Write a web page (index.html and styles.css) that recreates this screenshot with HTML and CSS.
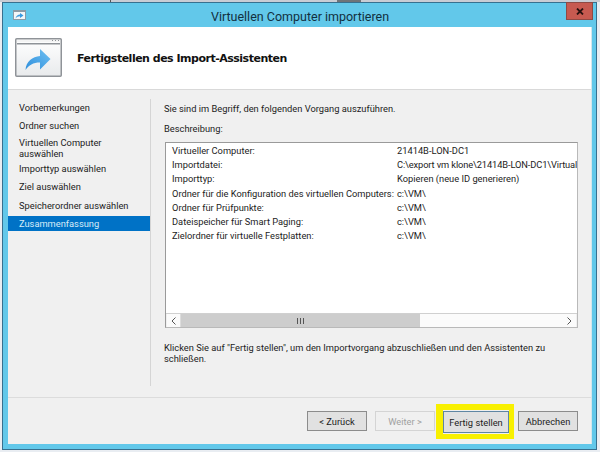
FILE: index.html
```html
<!DOCTYPE html>
<html lang="de">
<head>
<meta charset="utf-8">
<title>Virtuellen Computer importieren</title>
<link rel="stylesheet" href="styles.css">
</head>
<body>
<div class="desktop-strip"><i class="mark m1"></i><i class="mark m2"></i></div>
<div class="window">
  <div class="titlebar">
    <svg class="title-icon" width="13" height="10" viewBox="0 0 13 10"><rect x=".5" y=".5" width="12" height="9" fill="#f4f6f8" stroke="#8a9aa6"/><rect x="1" y="1" width="11" height="1" fill="#8a9aa6"/><path d="M2.5 8.500C3 6 5 4.600 7 4.600V3l3.500 2.500L7 8V6.300C5 6.300 3.700 7 2.500 8.500z" fill="#3a9be0"/></svg>
    <span class="title-text">Virtuellen Computer importieren</span>
    <span class="close"><svg width="8" height="7" viewBox="0 0 8 7"><path d="M1 .5l6 6M7 .5l-6 6" stroke="#2a1210" stroke-width="1.800"/></svg></span>
  </div>
  <div class="client">
    <header class="header">
      <svg class="header-icon" width="47" height="39" viewBox="0 0 47 39">
        <defs><linearGradient id="arrow" x1="0" y1="1" x2="1" y2="0"><stop offset="0" stop-color="#2f8fdc"/><stop offset="1" stop-color="#6fc0f2"/></linearGradient>
        <linearGradient id="pane" x1="0" y1="0" x2="0" y2="1"><stop offset="0" stop-color="#ffffff"/><stop offset="1" stop-color="#e8eaec"/></linearGradient></defs>
        <rect x=".75" y=".75" width="45.500" height="37.500" rx="1" fill="url(#pane)" stroke="#8f9398" stroke-width="1.500"/>
        <rect x="2" y="2" width="43" height="2" fill="#f4f4f4"/>
        <path d="M37 2.500h1M40 2.500h1M43 2.500h1" stroke="#8f9398"/>
        <rect x="2" y="5" width="43" height="1.500" fill="#8f9398"/>
        <path d="M10.500 32C11 23.500 17.500 18.500 25 18V11l10.500 10L25 31.500V24.500C18 24.500 14 27 10.500 32z" fill="url(#arrow)"/>
      </svg>
      <h1 class="heading">Fertigstellen des Import-Assistenten</h1>
    </header>
    <div class="main">
      <nav class="steps">
        <div class="step">Vorbemerkungen</div>
        <div class="step">Ordner suchen</div>
        <div class="step step-two">Virtuellen Computer auswählen</div>
        <div class="step">Importtyp auswählen</div>
        <div class="step">Ziel auswählen</div>
        <div class="step">Speicherordner auswählen</div>
        <div class="step selected">Zusammenfassung</div>
      </nav>
      <section class="content">
        <p class="intro">Sie sind im Begriff, den folgenden Vorgang auszuführen.</p>
        <p class="label">Beschreibung:</p>
        <div class="listbox">
          <div class="rows">
            <div class="row"><span class="key">Virtueller Computer:</span><span class="val">21414B-LON-DC1</span></div>
            <div class="row"><span class="key">Importdatei:</span><span class="val val-tight">C:\export vm klone\21414B-LON-DC1\Virtual</span></div>
            <div class="row"><span class="key">Importtyp:</span><span class="val">Kopieren (neue ID generieren)</span></div>
            <div class="row"><span class="key">Ordner für die Konfiguration des virtuellen Computers:</span><span class="val">c:\VM\</span></div>
            <div class="row"><span class="key">Ordner für Prüfpunkte:</span><span class="val">c:\VM\</span></div>
            <div class="row"><span class="key">Dateispeicher für Smart Paging:</span><span class="val">c:\VM\</span></div>
            <div class="row"><span class="key">Zielordner für virtuelle Festplatten:</span><span class="val">c:\VM\</span></div>
          </div>
          <div class="scrollbar">
            <span class="sb-btn"><svg width="5" height="8" viewBox="0 0 5 8"><path d="M4.500.5L1 4l3.500 3.500" fill="none" stroke="#555"/></svg></span>
            <span class="sb-thumb"><svg width="7" height="6" viewBox="0 0 7 6"><path d="M.5 0v6M3.500 0v6M6.500 0v6" stroke="#555"/></svg></span>
            <span class="sb-track"></span>
            <span class="sb-btn"><svg width="5" height="8" viewBox="0 0 5 8"><path d="M.5.500L4 4 .5 7.500" fill="none" stroke="#555"/></svg></span>
          </div>
        </div>
        <p class="outro">Klicken Sie auf "Fertig stellen", um den Importvorgang abzuschließen und den Assistenten zu schließen.</p>
      </section>
    </div>
    <footer class="footer">
      <button class="btn" type="button">&lt; Zurück</button>
      <button class="btn disabled" type="button">Weiter &gt;</button>
      <span class="finish-wrap"><button class="btn finish" type="button">Fertig stellen</button><span class="highlight"></span></span>
      <button class="btn" type="button">Abbrechen</button>
    </footer>
  </div>
</div>
</body>
</html>
```
FILE: styles.css
```css
* { box-sizing: border-box; }
html, body { margin: 0; padding: 0; }
body {
  width: 600px;
  height: 452px;
  overflow: hidden;
  background: #e9edf2;
  font-family: Roboto, "Open Sans", sans-serif;
  font-size: 9.300px;
  color: #1c1c1c;
  position: relative;
}
.desktop-strip { height: 2px; background: #c8ccd4; position: relative; }
.mark { position: absolute; top: 0; height: 2px; background: #555; }
.m1 { left: 110px; width: 1px; }
.m2 { left: 337px; width: 24px; background: #6f7378; }
.window {
  margin-left: 2px;
  width: 595px;
  height: 448px;
  background: #62c8ea;
  border: 1px solid #37708f;
  display: flex;
  flex-direction: column;
  padding: 0 4px 5px 5px;
}
.titlebar {
  height: 24px;
  flex: none;
  display: flex;
  align-items: center;
  justify-content: center;
  position: relative;
  font-size: 12.500px;
  color: #12303f;
}
.title-icon { position: absolute; left: 5px; top: 7px; }
.title-text { position: relative; top: 1px; }
.close {
  position: absolute;
  right: -1px;
  top: -1px;
  width: 27px;
  height: 18px;
  background: #c75a50;
  border: 1px solid #8f4a44;
  display: flex;
  align-items: center;
  justify-content: center;
}
.client {
  flex: 1;
  min-height: 0;
  background: #f0f0f0;
  display: flex;
  flex-direction: column;
  border-right: 1px solid #d6e6ec;
}
.header {
  height: 63px;
  flex: none;
  background: #fff;
  border-bottom: 1px solid #d9d9d9;
  display: flex;
  align-items: center;
  padding-left: 7px;
  gap: 15px;
}
.header-icon { position: relative; top: -1px; }
.heading { margin: 1px 0 0; font-size: 11px; font-weight: 700; color: #111; font-family: "DejaVu Sans", sans-serif; letter-spacing: -.5px; }
.main { flex: 1; min-height: 0; display: flex; padding-top: 9px; }
.steps {
  width: 143px;
  flex: none;
  height: 287px;
  border-right: 1px solid #d5d5d5;
}
.step { padding-left: 11px; line-height: 18.300px; height: 18.300px; }
.step-two { height: 24.500px; line-height: 11px; padding: 1px 40px 0 11px; }
.step.selected { background: #0072c6; color: #d8ecf8; line-height: 15px; height: 15px; margin-top: 1.500px; }
.content { flex: 1; min-width: 0; padding: 0 13px; }
.intro { margin: 3px 0 0; line-height: 14px; }
.label { margin: 6px 0 0; line-height: 14px; }
.listbox {
  margin: 6px 0 0 1px;
  height: 186px;
  background: #fff;
  border: 1px solid #9a9a9a;
  border-right-color: #b9b9b9;
  border-bottom-color: #b9b9b9;
  display: flex;
  flex-direction: column;
}
.rows { flex: 1; min-height: 0; padding: 1px 0 0 6px; overflow: hidden; }
.row { display: flex; height: 14.200px; line-height: 14.200px; white-space: nowrap; }
.key { width: 225px; flex: none; }
.val { flex: 1; min-width: 0; }
.val-tight { letter-spacing: -.12px; }
.scrollbar { height: 14px; flex: none; display: flex; background: #f0f0f0; padding: 0 1px; border-top: 1px solid #d0d0d0; }
.sb-btn { width: 13px; flex: none; background: #fbfbfb; display: flex; align-items: center; justify-content: center; }
.sb-thumb { width: 240px; flex: none; background: #cdcdcd; display: flex; align-items: center; justify-content: center; border-left: 1px solid #ddd; }
.sb-track { flex: 1; background: #fbfbfb; }
.outro { margin: 14px 0 0; line-height: 11px; width: 410px; }
.footer {
  height: 47px;
  flex: none;
  border-top: 1px solid #dcdcdc;
  display: flex;
  align-items: flex-start;
  padding: 13px 13px 0 0;
  justify-content: flex-end;
  gap: 8px;
}
.btn {
  width: 60px;
  height: 20px;
  padding: 0;
  background: #e1e1e1;
  border: 1px solid #8c8c8c;
  font: inherit;
  color: #1c1c1c;
}
.btn.disabled { background: #f0f0f0; border-color: #d4d4d4; color: #a0a0a0; }
.finish-wrap { position: relative; display: block; margin-right: 1px; }
.btn.finish { width: 66px; height: 22px; border-color: #5f86a3; }
.highlight {
  position: absolute;
  left: -7px;
  top: -7px;
  width: 78px;
  height: 35px;
  border: solid #f8f000;
  border-width: 6px 5px 5px 7px;
}
```
